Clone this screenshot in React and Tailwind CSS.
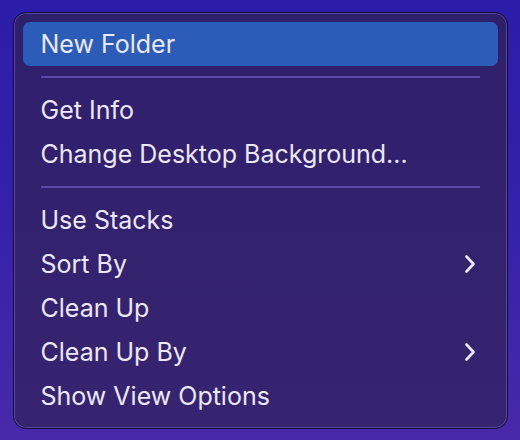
import React from "react";

const items = [
  { label: "New Folder", active: true },
  "sep",
  { label: "Get Info" },
  { label: "Change Desktop Background..." },
  "sep",
  { label: "Use Stacks" },
  { label: "Sort By", sub: true },
  { label: "Clean Up" },
  { label: "Clean Up By", sub: true },
  { label: "Show View Options" },
];

const Chevron = () => (
  <svg width="12" height="20" viewBox="0 0 12 20" fill="none" className="mr-[2px]">
    <path d="M2.5 2.5 L9.5 10 L2.5 17.5" stroke="#ece8f6" strokeWidth="2.6" strokeLinecap="round" strokeLinejoin="round" />
  </svg>
);

const MenuRow = ({ label, active, sub }) => (
  <div
    className={`flex h-[44px] items-center justify-between rounded-[7px] pl-[18px] pr-[20px] ${
      active ? "bg-[#2a5cb8]" : ""
    }`}
  >
    <span className="text-[25px] leading-none tracking-[0px] text-[#ece8f6]">{label}</span>
    {sub && <Chevron />}
  </div>
);

export default function App() {
  return (
    <div
      className="flex h-[440px] w-[520px] items-start justify-center bg-gradient-to-b from-[#2b1ca9] via-[#3521aa] to-[#4829a9] pt-[12px]"
      style={{ fontFamily: "Inter, 'Noto Sans', sans-serif" }}
    >
      <div className="w-[495px] rounded-[13px] border border-[#150c3a] bg-gradient-to-b from-[#2e1f6c] to-[#372470] p-[9px] pb-[10px] shadow-[inset_0_0_0_1px_rgba(140,120,210,0.45)]">
        {items.map((it, i) =>
          it === "sep" ? (
            <div key={i} className="flex h-[22px] items-center px-[18px]">
              <div className="h-[2px] w-full bg-[#5b4aa3]" />
            </div>
          ) : (
            <MenuRow key={i} {...it} />
          )
        )}
      </div>
    </div>
  );
}
